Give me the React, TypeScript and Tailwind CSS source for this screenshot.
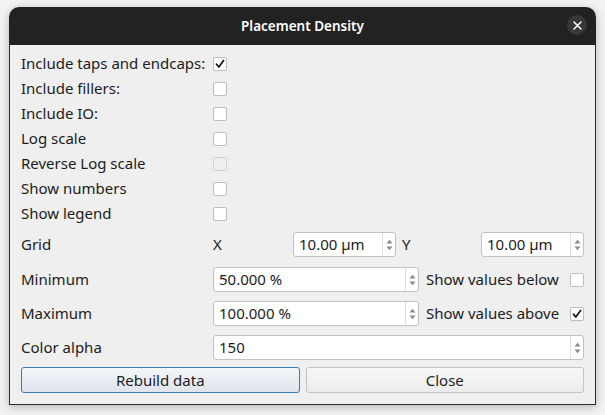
import React from "react";

const font = { fontFamily: '"Noto Sans", "Open Sans", sans-serif' };

function Check({ checked = false, disabled = false }: { checked?: boolean; disabled?: boolean }) {
  return (
    <div
      className={`w-[14px] h-[14px] border rounded-[2px] flex items-center justify-center ${
        disabled ? "bg-[#efefef] border-[#cfcfcf]" : "bg-white border-[#bdbdbd]"
      }`}
    >
      {checked && (
        <svg width="10" height="10" viewBox="0 0 10 10">
          <path d="M1.5 5.2 L3.8 8 L8.6 1.5" stroke="#111" strokeWidth="1.7" fill="none" strokeLinecap="round" strokeLinejoin="round" />
        </svg>
      )}
    </div>
  );
}

function Spin({ value, className }: { value: string; className: string }) {
  return (
    <div className={`h-[25px] bg-white border border-[#c2c2c2] rounded-[3px] flex items-center ${className}`}>
      <div className="flex-1 pl-[5px] text-[15px] text-[#1c1c1c] leading-none">{value}</div>
      <div className="w-[13px] h-full flex flex-col items-center justify-center border-l border-[#dedede] gap-[2px]">
        <svg width="7" height="5" viewBox="0 0 7 5">
          <path d="M0.5 4.5 L3.5 0.8 L6.5 4.5 Z" fill="#8a8a8a" />
        </svg>
        <svg width="7" height="5" viewBox="0 0 7 5">
          <path d="M0.5 0.5 L3.5 4.2 L6.5 0.5 Z" fill="#8a8a8a" />
        </svg>
      </div>
    </div>
  );
}

function CheckRow({ label, checked, disabled }: { label: string; checked?: boolean; disabled?: boolean }) {
  return (
    <div className="h-[25px] flex items-center">
      <div className="w-[192px] text-[15px] text-[#1c1c1c]">{label}</div>
      <Check checked={checked} disabled={disabled} />
    </div>
  );
}

export default function App() {
  return (
    <div className="w-[605px] h-[415px] bg-[#f2f2f2] pl-[9px] pt-[7px] overflow-hidden" style={font}>
      <div className="w-[587px] h-[398px] flex flex-col rounded-t-[10px] overflow-hidden shadow-[0_2px_8px_rgba(0,0,0,0.25)]">
        <div className="h-[38px] bg-[#222222] flex items-center justify-center relative">
          <div className="text-white font-semibold text-[13.5px]">Placement Density</div>
          <div className="absolute right-[9px] top-[8px] w-[20px] h-[20px] rounded-full bg-[#383838] flex items-center justify-center">
            <svg width="9" height="9" viewBox="0 0 9 9">
              <path d="M1 1 L8 8 M8 1 L1 8" stroke="#fff" strokeWidth="1.5" strokeLinecap="round" />
            </svg>
          </div>
        </div>
        <div className="flex-1 bg-[#efefef] border-x border-b border-[#2e2e2e] pl-[11px] pr-[11px] pt-[6px] flex flex-col">
          <CheckRow label="Include taps and endcaps:" checked />
          <CheckRow label="Include fillers:" />
          <CheckRow label="Include IO:" />
          <CheckRow label="Log scale" />
          <CheckRow label="Reverse Log scale" disabled />
          <CheckRow label="Show numbers" />
          <CheckRow label="Show legend" />

          <div className="mt-[6px] h-[25px] flex items-center text-[15px] text-[#1c1c1c]">
            <div className="w-[192px]">Grid</div>
            <div className="w-[80px]">X</div>
            <Spin value="10.00 µm" className="w-[103px]" />
            <div className="w-[85px] pl-[6px]">Y</div>
            <Spin value="10.00 µm" className="w-[103px]" />
          </div>

          <div className="mt-[10px] h-[25px] flex items-center text-[15px] text-[#1c1c1c]">
            <div className="w-[192px]">Minimum</div>
            <Spin value="50.000 %" className="w-[206px]" />
            <div className="flex-1 pl-[7px]">Show values below</div>
            <Check />
          </div>

          <div className="mt-[9px] h-[25px] flex items-center text-[15px] text-[#1c1c1c]">
            <div className="w-[192px]">Maximum</div>
            <Spin value="100.000 %" className="w-[206px]" />
            <div className="flex-1 pl-[7px]">Show values above</div>
            <Check checked />
          </div>

          <div className="mt-[9px] h-[25px] flex items-center text-[15px] text-[#1c1c1c]">
            <div className="w-[192px]">Color alpha</div>
            <Spin value="150" className="flex-1" />
          </div>

          <div className="mt-[7px] flex gap-[6px] text-[15px] text-[#1c1c1c]">
            <div className="flex-1 h-[26px] rounded-[3px] border border-[#3a7bb8] bg-gradient-to-b from-[#f4f6f9] to-[#dfe5ec] flex items-center justify-center">
              Rebuild data
            </div>
            <div className="flex-1 h-[26px] rounded-[3px] border border-[#c4c4c4] bg-gradient-to-b from-[#f7f7f7] to-[#ececec] flex items-center justify-center">
              Close
            </div>
          </div>
        </div>
      </div>
    </div>
  );
}
